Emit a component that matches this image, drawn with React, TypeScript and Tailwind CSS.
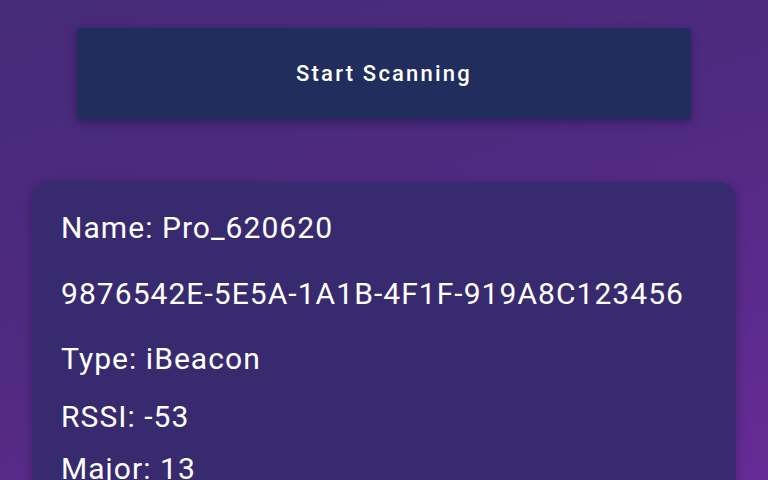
import React from 'react';

const rows = [
  { text: 'Name: Pro_620620', cls: 'h-[64px]' },
  { text: '9876542E-5E5A-1A1B-4F1F-919A8C123456', cls: 'h-[67px]' },
  { text: 'Type: iBeacon', cls: 'h-[63px]' },
  { text: 'RSSI: -53', cls: 'h-[53px]' },
  { text: 'Major: 13', cls: 'h-[52px]' },
];

export default function App() {
  return (
    <div
      className="h-[480px] w-[768px] overflow-hidden bg-[linear-gradient(160deg,#452b78_0%,#4f2a80_45%,#662b96_100%)] text-white"
      style={{ fontFamily: 'Roboto, "Noto Sans", sans-serif' }}
    >
      <div className="px-[77px] pt-[28px]">
        <button className="flex h-[91px] w-full items-center justify-center rounded-[4px] bg-[#212d5c] text-[22px] font-medium tracking-[0.1em] shadow-[0_3px_8px_rgba(20,10,50,0.45)]">
          Start Scanning
        </button>
      </div>

      <div className="mx-[32px] mt-[63px] h-[320px] rounded-[16px] bg-[#372a6e]/95 px-[29px] pt-[14px] shadow-[0_2px_10px_rgba(20,10,50,0.3)]">
        {rows.map((r) => (
          <div key={r.text} className={`flex items-center text-[30px] leading-none tracking-[0.035em] ${r.cls}`}>
            {r.text}
          </div>
        ))}
      </div>
    </div>
  );
}
